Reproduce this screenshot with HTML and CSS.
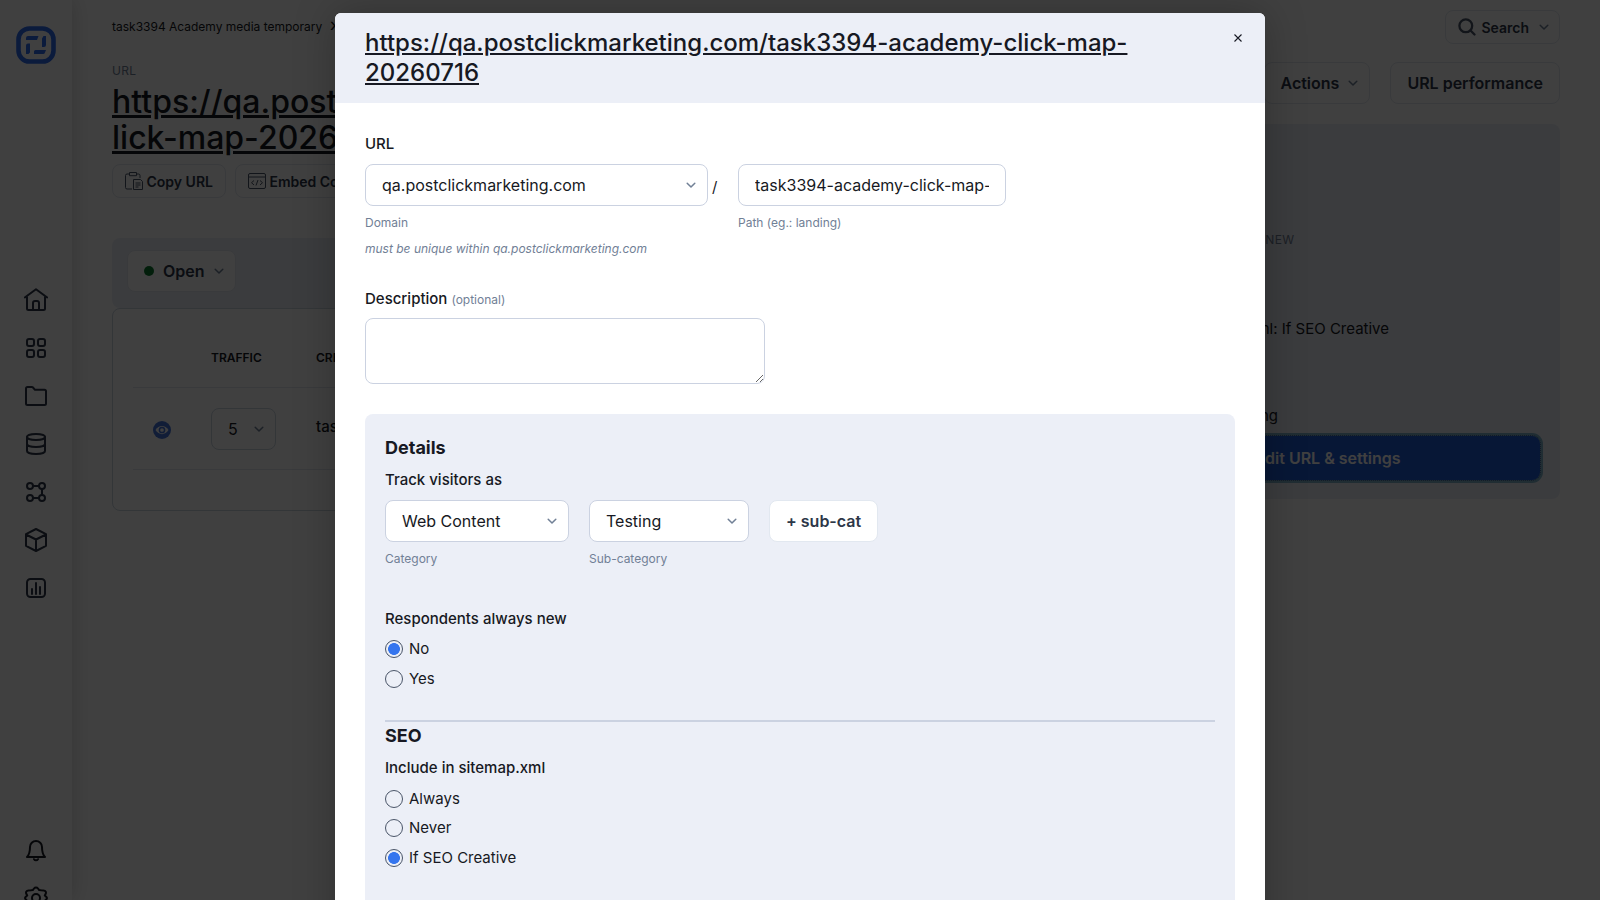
FILE: index.html
```html
<!DOCTYPE html>
<html lang="en">
<head>
  <meta charset="UTF-8">
  <meta name="viewport" content="width=device-width, initial-scale=1.0">
  <title>URL settings</title>
  <link rel="stylesheet" href="styles.css">
</head>
<body>
  <svg class="defs" width="0" height="0">
    <symbol id="chevron" viewBox="0 0 12 12"><path d="M2.200 4.200 6 8l3.800-3.800" fill="none" stroke="currentColor" stroke-width="1.5" stroke-linecap="round" stroke-linejoin="round"/></symbol>
  </svg>

  <div class="app">
    <nav class="sidebar">
      <svg class="logo" viewBox="0 0 40 38">
        <rect x="2.5" y="2.5" width="35" height="33" rx="11" fill="none" stroke="#2f6bf0" stroke-width="4.600"/>
        <path fill="#2f6bf0" d="M12 10h10.500l-1.500 4h-11v-2a2 2 0 0 1 2-2zM26 12.500l1.500-2.500h2.500v9a2 2 0 0 1-2 2h-2zM10 19.500a2 2 0 0 1 2-2h2v9l-1.500 1.500h-2.500zM18 25.500a1.500 1.500 0 0 1 1.500-1.500h10.500l-1 2.500a2 2 0 0 1-2 1.500h-9z"/>
      </svg>
      <div class="nav-icons">
        <svg viewBox="0 0 24 24"><path d="M.8 9.500 12 1.200l11.200 8.300M3 8v12.500A1.500 1.500 0 0 0 4.500 22h15a1.500 1.500 0 0 0 1.500-1.500V8M9 22v-7a2 2 0 0 1 2-2h2a2 2 0 0 1 2 2v7"/></svg>
        <svg viewBox="0 0 24 24"><rect x="3" y="3" width="7" height="7" rx="2"/><rect x="14" y="3" width="7" height="7" rx="2"/><rect x="3" y="14" width="7" height="7" rx="2"/><rect x="14" y="14" width="7" height="7" rx="2"/></svg>
        <svg viewBox="0 0 24 24"><path d="M2 19.500v-15A1.500 1.500 0 0 1 3.500 3h4.400a1.500 1.500 0 0 1 1.100.5l2 2.300h9.500A1.500 1.500 0 0 1 22 7.300v12.200a1.500 1.500 0 0 1-1.500 1.500h-17A1.500 1.500 0 0 1 2 19.500z"/></svg>
        <svg viewBox="0 0 24 24"><ellipse cx="12" cy="5" rx="9" ry="3"/><path d="M3 5v14c0 1.700 4 3 9 3s9-1.300 9-3V5M3 12c0 1.700 4 3 9 3s9-1.300 9-3"/></svg>
        <svg viewBox="0 0 24 24"><circle cx="6" cy="6" r="3"/><circle cx="18" cy="6" r="3"/><circle cx="6" cy="18" r="3"/><circle cx="18" cy="18" r="3"/><path d="M9 6h6M18 9v6M9 18h6"/></svg>
        <svg viewBox="0 0 24 24"><path d="M12 1 22 6.200v11.600L12 23 2 17.800V6.200zM2 6.500l10 5 10-5M12 11.500V23"/></svg>
        <svg viewBox="0 0 24 24"><rect x="3" y="3" width="18" height="18" rx="3.500"/><path d="M8 13v5M12 7v11M16 11v7"/></svg>
      </div>
      <div class="nav-icons nav-bottom">
        <svg viewBox="0 0 24 24"><path d="M18 9a6 6 0 0 0-12 0c0 6-1 8-3 10h18c-2-2-3-4-3-10M10 21.200a2.400 2.400 0 0 0 4 0"/></svg>
        <svg viewBox="0 0 24 24"><circle cx="12" cy="12" r="4"/><path d="M10 2.500a2.500 2.500 0 0 1 4 0l1.200 1.600 2 .2 2.600.2a2.200 2.200 0 0 1 1.900 3.200L20.800 9.500l1.400 1.200a2 2 0 0 1 0 2.800l-1.400 1.300.9 2a2.200 2.200 0 0 1-1.900 3l-2.600.3-2 .2-1.200 1.200a2.500 2.500 0 0 1-4 0l-1.200-1.200-2-.2-2.600-.3a2.200 2.200 0 0 1-1.900-3l.9-2-1.400-1.300a2 2 0 0 1 0-2.800l1.400-1.200-.9-1.800a2.200 2.200 0 0 1 1.900-3.200l2.600-.2 2-.2z"/></svg>
      </div>
    </nav>

    <main class="content">
      <div class="topbar">
        <div class="breadcrumb">task3394 Academy media temporary <span class="crumb-sep">›</span></div>
        <button class="btn btn-small search">
          <svg class="search-icon" viewBox="0 0 18 18"><circle cx="7.800" cy="7.800" r="6.400"/><path d="m12.500 12.500 4 4"/></svg>
          Search
          <svg class="chev"><use href="#chevron"/></svg>
        </button>
      </div>

      <div class="columns">
        <section class="left">
          <div class="eyebrow">URL</div>
          <h1 class="page-title">https://qa.postclickmarketing.com/task3394-academy-c<br>lick-map-20260716</h1>
          <div class="link-buttons">
            <button class="btn btn-small">
              <svg class="btn-icon" viewBox="0 0 18 18"><path d="M4.500 2H2a1.500 1.500 0 0 0-1.500 1.500v12A1.500 1.500 0 0 0 2 17h5M11.500 2H13.500A1.500 1.500 0 0 1 15 3.500V6M4.500.5h7v3.200h-7zM8.500 7.500h7l2 2v8h-9zM10.500 11h5M10.500 13h5M10.500 15h3"/></svg>
              Copy URL
            </button>
            <button class="btn btn-small">
              <svg class="btn-icon" viewBox="0 0 18 18"><path d="M2 1.500h14a1.500 1.500 0 0 1 1.500 1.500v12a1.500 1.500 0 0 1-1.500 1.500H2A1.500 1.500 0 0 1 .5 15V3A1.500 1.500 0 0 1 2 1.500zM.5 5h17M6 8.500l-2.500 2.200L6 13M12 8.500l2.500 2.200L12 13M10 8l-2 5.500"/></svg>
              Embed Code
            </button>
          </div>
          <div class="status-bar">
            <button class="btn"><span class="dot"></span>Open <svg class="chev"><use href="#chevron"/></svg></button>
          </div>
          <div class="table-card">
            <div class="table-row table-head"><span></span><span>TRAFFIC</span><span>CREATIVE</span></div>
            <div class="table-row">
              <svg class="eye" viewBox="0 0 18 18"><circle cx="9" cy="9" r="9" fill="#4574da"/><path d="M2.500 9c3.200-5.500 9.800-5.500 13 0-3.200 5.500-9.800 5.500-13 0z" fill="#fff"/><circle cx="9" cy="9" r="2.600" fill="#fff" stroke="#4574da" stroke-width="1.500"/></svg>
              <div class="traffic">5 <svg class="chev"><use href="#chevron"/></svg></div>
              <b class="creative">task3394 Academy</b>
            </div>
          </div>
        </section>

        <aside class="right">
          <div class="actions">
            <button class="btn">Actions <svg class="chev"><use href="#chevron"/></svg></button>
            <button class="btn">URL performance</button>
          </div>
          <div class="summary">
            <div class="summary-label">RESPONDENTS ALWAYS NEW</div>
            <div class="summary-seo">Include in sitemap.xml: If SEO Creative</div>
            <div class="summary-track">Web Content / Testing</div>
            <button class="edit-btn">Edit URL &amp; settings</button>
          </div>
        </aside>
      </div>
    </main>
  </div>

  <div class="overlay">
    <div class="modal">
      <header class="modal-header">
        <h2>https://qa.postclickmarketing.com/task3394-academy-click-map-20260716</h2>
        <svg class="close" viewBox="0 0 8 8"><path d="m.5.5 7 7M7.500.5l-7 7"/></svg>
      </header>

      <form class="modal-body">
        <label class="label">URL</label>
        <div class="url-row">
          <div class="domain">
            <div class="select"><select><option>qa.postclickmarketing.com</option></select><svg class="chev"><use href="#chevron"/></svg></div>
            <div class="help">Domain</div>
          </div>
          <span class="slash">/</span>
          <div class="path">
            <input type="text" value="task3394-academy-click-map-20260716">
            <div class="help">Path (eg.: landing)</div>
          </div>
        </div>
        <div class="hint">must be unique within qa.postclickmarketing.com</div>

        <label class="label description">Description <small>(optional)</small></label>
        <textarea></textarea>

        <div class="panel">
          <h3>Details</h3>
          <label class="label">Track visitors as</label>
          <div class="track-row">
            <div class="category">
              <div class="select"><select><option>Web Content</option></select><svg class="chev"><use href="#chevron"/></svg></div>
              <div class="help">Category</div>
            </div>
            <div class="subcategory">
              <div class="select"><select><option>Testing</option></select><svg class="chev"><use href="#chevron"/></svg></div>
              <div class="help">Sub-category</div>
            </div>
            <button type="button" class="btn">+ sub-cat</button>
          </div>

          <label class="label respondents">Respondents always new</label>
          <label class="radio"><input type="radio" name="respondents" checked>No</label>
          <label class="radio"><input type="radio" name="respondents">Yes</label>

          <hr>
          <h3>SEO</h3>
          <label class="label sitemap">Include in sitemap.xml</label>
          <label class="radio"><input type="radio" name="sitemap">Always</label>
          <label class="radio"><input type="radio" name="sitemap">Never</label>
          <label class="radio"><input type="radio" name="sitemap" checked>If SEO Creative</label>
        </div>
      </form>
    </div>
  </div>
</body>
</html>
```
FILE: styles.css
```css
* { box-sizing: border-box; }
body { position: relative; margin: 0; height: 900px; overflow: hidden; font-family: Inter, sans-serif; font-size: 15px; line-height: 20px; color: #171923; background: #fff; }
h1, h2, h3 { margin: 0; }
button, input, select, textarea { font-family: inherit; }
.defs { position: absolute; }
.app { display: flex; height: 900px; overflow: hidden; }

/* sidebar */
.sidebar { width: 72px; flex: none; padding-top: 26px; display: flex; flex-direction: column; align-items: center; box-shadow: 0 0 20px rgba(0,0,0,.18); }
.logo { flex: none; width: 40px; height: 38px; }
.nav-icons { flex: none; display: flex; flex-direction: column; gap: 24px; margin-top: 224px; }
.nav-icons svg { width: 24px; height: 24px; fill: none; stroke: #2d3748; stroke-width: 2; stroke-linecap: round; stroke-linejoin: round; }
.nav-bottom { margin-top: 238px; }
.nav-bottom svg { stroke: #171923; }

/* page */
.content { flex: 1; min-width: 0; padding: 10px 40px 0; }
.topbar { display: flex; justify-content: space-between; height: 52px; }
.breadcrumb { height: 34px; font-size: 12px; line-height: 34px; }
.crumb-sep { margin-left: 4px; font-size: 18px; line-height: 1; }
.btn { display: inline-flex; align-items: center; height: 42px; padding: 0 16px; background: #fff; border: 1px solid #e2e8f0; border-radius: 8px; font-size: 16px; font-weight: 600; color: #2d3748; white-space: nowrap; }
.btn-small { height: 34px; padding: 0 12px; font-size: 14px; }
.chev { width: 12px; height: 12px; color: #718096; }
.btn .chev { margin-left: 8px; margin-right: -6px; }
.search .chev { margin-left: 9px; margin-right: -3px; }
.search-icon { width: 18px; height: 18px; margin-right: 5px; fill: none; stroke: #4a5568; stroke-width: 2.3; stroke-linecap: round; }
.btn-icon { width: 18px; height: 18px; margin-right: 3.5px; fill: none; stroke: #4a5568; stroke-width: 1; }

.columns { display: flex; justify-content: space-between; }
.left { width: 950px; }
.eyebrow { font-size: 12px; line-height: 18px; color: #718096; letter-spacing: .3px; }
.page-title { margin-top: 4px; font-size: 32px; line-height: 36px; font-weight: 500; text-decoration: underline; white-space: nowrap; }
.link-buttons { display: flex; gap: 9px; margin-top: 8px; }
.status-bar { display: flex; align-items: flex-start; margin-top: 40px; height: 70px; padding: 12px 15px; background: #eceff7; border-radius: 8px; }
.dot { width: 10px; height: 10px; margin-right: 9px; border-radius: 50%; background: #0b7a2f; }
.table-card { height: 203px; padding: 20px; border: 1px solid #cbd5e0; border-radius: 8px; }
.table-row { display: grid; grid-template-columns: 78px 105px 1fr; align-items: center; height: 82px; border-bottom: 1px solid #e2e8f0; }
.table-head { height: 59px; font-size: 12px; font-weight: 600; }
.eye { width: 18px; height: 18px; margin-left: 20px; margin-top: 2px; }
.traffic { display: flex; align-items: center; justify-content: space-between; width: 65px; height: 42px; padding: 0 10px 0 16px; border: 1px solid #cbd5e0; border-radius: 8px; font-size: 16px; }
.creative { padding-bottom: 4px; font-size: 15px; font-weight: 500; }

.right { width: 466px; }
.actions { display: flex; justify-content: flex-end; gap: 20px; height: 42px; }
.summary { height: 375px; margin-top: 20px; padding: 106px 20px 0; background: #eceff7; border-radius: 8px; }
.summary-label { font-size: 12px; color: #718096; letter-spacing: .33px; }
.summary-seo { width: 275px; margin-top: 69px; text-align: right; white-space: nowrap; }
.summary-track { width: 164px; margin-top: 67px; text-align: right; white-space: nowrap; }
.edit-btn { width: 100%; height: 44px; margin-top: 10px; padding-left: 8px; border: none; border-radius: 8px; background: #1f5bd8; color: #fff; font-size: 16px; font-weight: 600; outline: 1px dotted #4a6a9a; box-shadow: 0 0 0 3px #7fb3c9; }

/* modal */
.overlay { position: absolute; inset: 0; padding-top: 13px; background: rgba(0,0,0,.75); overflow: hidden; }
.modal { width: 930px; height: 1200px; margin: 0 auto; background: #fff; border-radius: 6px; box-shadow: 0 0 40px rgba(0,0,0,.25); }
.modal-header { display: flex; justify-content: space-between; height: 90px; padding: 15px 23px 0 30px; background: #eceff7; border-radius: 6px 6px 0 0; }
.modal-header h2 { width: 800px; font-size: 24px; line-height: 30px; font-weight: 500; text-decoration: underline; }
.close { width: 8px; height: 8px; margin-top: 6px; fill: none; stroke: #171923; stroke-width: 1.1; overflow: visible; }
.modal-body { padding: 31px 30px 0; }
.label { display: block; font-size: 15px; font-weight: 500; }
.url-row { display: flex; margin-top: 10px; }
.domain { width: 343px; }
.path { width: 268px; }
.slash { width: 30px; padding-left: 4px; line-height: 45px; }
.select { position: relative; }
.select .chev { position: absolute; right: 11px; top: 15px; }
select, input[type=text], textarea { display: block; width: 100%; height: 42px; padding: 0 16px; border: 1px solid #cbd2e1; border-radius: 8px; background: #fff; color: #171923; font-size: 16px; }
select { appearance: none; }
.help { margin-top: 7px; font-size: 12px; color: #718096; }
.hint { margin-top: 6px; font-size: 12px; font-style: italic; color: #718096; }
.description { margin-top: 30px; }
.label small { font-size: 12px; font-weight: 400; color: #718096; }
textarea { width: 400px; height: 66px; margin-top: 8px; }
.panel { height: 700px; margin-top: 30px; padding: 20px 20px 0; background: #eceff7; border-radius: 8px; }
.panel h3 { height: 36px; font-size: 18px; line-height: 27px; font-weight: 700; }
.track-row { display: flex; gap: 20px; margin-top: 10px; }
.category { width: 184px; }
.subcategory { width: 160px; }
.respondents { margin-top: 40px; }
.radio { display: flex; align-items: center; height: 18px; margin-bottom: 12px; font-size: 15px; }
.respondents + .radio { margin-top: 11px; }
.radio input { appearance: none; width: 18px; height: 18px; margin: 0 6px 0 0; border: 1px solid #4a5568; border-radius: 50%; background: transparent; }
.radio input:checked { background: radial-gradient(circle, #3575ee 5.6px, transparent 6.2px); }
hr { height: 2px; margin: 32px 0 0; border: none; background: #cbd2e1; }
.sitemap { margin-bottom: 12px; }
.sitemap ~ .radio { margin-bottom: 11.4px; }
```
